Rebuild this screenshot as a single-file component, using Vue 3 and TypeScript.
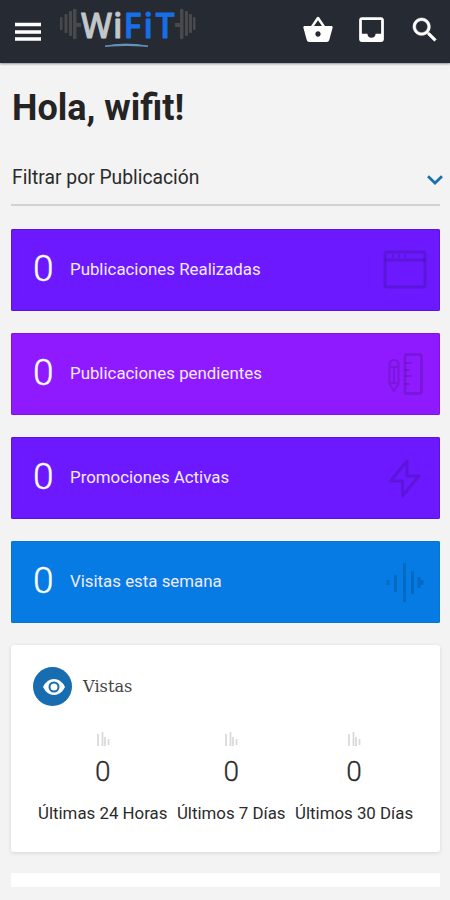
<script setup lang="ts">
type IconName = 'window' | 'tools' | 'bolt' | 'pulse'

interface StatCard {
  count: number
  label: string
  tone: 'indigo' | 'violet' | 'blue'
  icon: IconName
}

interface ViewStat {
  count: number
  label: string
}

const cards: StatCard[] = [
  { count: 0, label: 'Publicaciones Realizadas', tone: 'indigo', icon: 'window' },
  { count: 0, label: 'Publicaciones pendientes', tone: 'violet', icon: 'tools' },
  { count: 0, label: 'Promociones Activas', tone: 'indigo', icon: 'bolt' },
  { count: 0, label: 'Visitas esta semana', tone: 'blue', icon: 'pulse' },
]

const views: ViewStat[] = [
  { count: 0, label: 'Últimas 24 Horas' },
  { count: 0, label: 'Últimos 7 Días' },
  { count: 0, label: 'Últimos 30 Días' },
]
</script>

<template>
  <div class="screen">
    <header class="topbar">
      <button class="icon-btn menu" aria-label="Menú">
        <svg width="26" height="20" viewBox="0 0 26 20">
          <path d="M0 2.5H26M0 10H26M0 17H26" stroke="#fff" stroke-width="3.4" />
        </svg>
      </button>
      <svg class="logo" width="140" height="54" viewBox="0 -5 140 54">
        <g fill="#47494b">
          <rect x="2" y="12" width="2.5" height="13" rx="1" />
          <rect x="6.5" y="9" width="3" height="19" rx="1" />
          <rect x="11" y="6" width="3" height="25" rx="1" />
          <rect x="15" y="4" width="3.5" height="30" rx="1" />
          <rect x="18" y="18" width="5" height="4" />
          <rect x="117" y="18" width="5" height="4" />
          <rect x="122" y="4" width="3.5" height="30" rx="1" />
          <rect x="127" y="6" width="3" height="25" rx="1" />
          <rect x="131" y="9" width="3" height="19" rx="1" />
          <rect x="135" y="12" width="2.5" height="13" rx="1" />
        </g>
        <text class="brand" y="32.5" fill="#c3c7ca" stroke="#c3c7ca"><tspan x="23" textLength="31" lengthAdjust="spacingAndGlyphs">W</tspan><tspan x="55">i</tspan></text>
        <text class="brand" y="32.5" fill="#176ee6" stroke="#176ee6"><tspan x="65.500">F</tspan><tspan x="85.500">i</tspan><tspan x="97.500">T</tspan></text>
        <path d="M47 41.200Q68 37 90 41.200Q68 39.700 47 41.200Z" fill="#6796bd" stroke="#6796bd" stroke-width="1" />
      </svg>
      <nav class="actions">
        <button class="icon-btn" aria-label="Carrito">
          <svg width="32" height="32" viewBox="0 0 24 24" fill="#fff">
            <path d="M17.21 9l-4.38-6.56c-.19-.28-.51-.42-.83-.42-.32 0-.64.14-.83.43L6.79 9H2c-.55 0-1 .45-1 1 0 .09.01.18.04.27l2.54 9.27c.23.84 1 1.46 1.92 1.46h13c.92 0 1.69-.62 1.93-1.46l2.54-9.27L23 10c0-.55-.45-1-1-1h-4.79zM9 9l3-4.400L15 9H9zm3 8c-1.100 0-2-.9-2-2s.9-2 2-2 2 .9 2 2-.9 2-2 2z" />
          </svg>
        </button>
        <button class="icon-btn" aria-label="Bandeja">
          <svg width="33" height="33" viewBox="0 0 24 24" fill="#fff">
            <path d="M19 3H4.990c-1.110 0-1.980.89-1.980 2L3 19c0 1.100.88 2 1.990 2H19c1.100 0 2-.9 2-2V5c0-1.110-.9-2-2-2zm0 12h-4c0 1.660-1.350 3-3 3s-3-1.340-3-3H4.990V5H19v10z" />
          </svg>
        </button>
        <button class="icon-btn" aria-label="Buscar">
          <svg width="32" height="32" viewBox="0 0 24 24" fill="#fff" stroke="#fff" stroke-width="0.400">
            <path d="M15.500 14h-.79l-.28-.27C15.410 12.590 16 11.110 16 9.500 16 5.910 13.090 3 9.500 3S3 5.910 3 9.500 5.910 16 9.500 16c1.610 0 3.090-.59 4.230-1.570l.27.28v.79l5 4.990L20.490 19l-4.990-5zm-6 0C7.010 14 5 11.990 5 9.500S7.010 5 9.500 5 14 7.010 14 9.500 11.990 14 9.500 14z" />
          </svg>
        </button>
      </nav>
    </header>

    <main class="content">
      <h1>Hola, wifit!</h1>

      <div class="filter">
        <span>Filtrar por Publicación</span>
        <svg width="18" height="12" viewBox="0 0 18 12" fill="none">
          <path d="M2 2.200L9 9L16 2.200" stroke="#1970ac" stroke-width="2.700" />
        </svg>
      </div>

      <section class="cards">
        <article v-for="card in cards" :key="card.label" class="card" :class="card.tone">
          <span class="count">{{ card.count }}</span>
          <span class="label">{{ card.label }}</span>
          <svg class="glyph" width="46" height="46" viewBox="0 0 46 46" fill="none" stroke-width="3">
            <g v-if="card.icon === 'window'">
              <rect x="3" y="5" width="40" height="35" rx="2" />
              <path d="M3 13H43M10 9H12M16 9H18M22 9H24" />
            </g>
            <g v-else-if="card.icon === 'tools'">
              <path d="M7.500 14Q7.500 9 12 9T16.500 14V33L12 40L7.500 33ZM7.500 16H16.500M7.500 32H16.500M12 17V32" stroke-width="2.200" />
              <rect x="23" y="3.500" width="16.500" height="39" rx="2" />
              <path d="M23 12H30M23 19H28M23 25H30M23 33H28" stroke-width="2" />
            </g>
            <path v-else-if="card.icon === 'bolt'" d="M25 6L8.500 26H20.500V41L37 21H25Z" stroke-linejoin="round" />
            <path v-else d="M6 21V26M13.500 16V33M22.500 4V43M30.500 12V35M37 18V29M40 21V26" />
          </svg>
        </article>
      </section>

      <section class="panel">
        <div class="panel-head">
          <span class="badge">
            <svg width="24" height="18" viewBox="0 0 24 18">
              <path d="M1 9Q5 1 12 1T23 9Q19 17 12 17T1 9Z" fill="#fff" />
              <circle cx="12" cy="9" r="4.500" fill="#fff" stroke="#176daf" stroke-width="2" />
            </svg>
          </span>
          <h2>Vistas</h2>
        </div>
        <div class="views">
          <div v-for="view in views" :key="view.label" class="view">
            <svg width="14" height="14" viewBox="0 0 14 14">
              <path d="M2 2V14M6.500 0V14M9 5V14M12.500 7V13" stroke="#d8d8d8" stroke-width="1.700" />
            </svg>
            <strong>{{ view.count }}</strong>
            <span>{{ view.label }}</span>
          </div>
        </div>
      </section>

      <div class="next-panel"></div>
    </main>
  </div>
</template>

<style>
body {
  background: #f3f3f3;
}
</style>

<style scoped>
* {
  box-sizing: border-box;
}

.screen {
  width: 450px;
  height: 900px;
  overflow: hidden;
  background: #f3f3f3;
  color: #2b2b2b;
  font-family: Roboto, "Liberation Sans", sans-serif;
  white-space: nowrap;
}

.topbar {
  display: flex;
  align-items: flex-start;
  height: 63px;
  padding-left: 15px;
  background: #262a32;
  box-shadow: 0 1px 2px #8f9397;
}

.icon-btn {
  display: block;
  padding: 0;
  border: 0;
  background: none;
}

.icon-btn svg,
.logo {
  display: block;
}

.menu {
  margin-top: 22px;
}

.logo {
  margin: 0 0 0 17px;
}

.brand {
  font: 600 34px "Open Sans", "Liberation Sans", sans-serif;
  stroke-width: 0.800px;
  stroke-linejoin: round;
}

.actions {
  display: flex;
  gap: 21px;
  margin: 13px 0 0 104px;
}

.content {
  padding: 0 10px 0 11px;
}

h1 {
  height: 40px;
  margin: 25px 0 0 1px;
  color: #242424;
  font-size: 36px;
  font-weight: 700;
  line-height: 40px;
}

.filter {
  display: flex;
  align-items: center;
  justify-content: space-between;
  height: 56px;
  margin-top: 22px;
  padding: 0 0 0 1px;
  border-bottom: 2px solid #d2d2d2;
  font-size: 19.300px;
}

.filter svg {
  margin: 5px -4px 0 0;
}

.cards {
  display: grid;
  gap: 22px;
  margin-top: 23px;
}

.card {
  display: flex;
  align-items: center;
  height: 82px;
  padding: 0 12px 0 22px;
  border-radius: 2px;
  color: #f3eaff;
}

.indigo {
  background: #6c19ff;
  box-shadow: inset 0 0 0 1px #5b12e4;
}

.violet {
  background: #901aff;
  box-shadow: inset 0 0 0 1px #8013e5;
}

.blue {
  background: #057be3;
  box-shadow: inset 0 0 0 1px #0874cf;
}

.count {
  width: 37px;
  padding-bottom: 4px;
  color: #fff;
  font-size: 37px;
  font-weight: 300;
  -webkit-text-stroke: 0.400px #fff;
}

.label {
  padding-bottom: 2px;
  font-size: 16.850px;
}

.glyph {
  margin-left: auto;
  stroke: rgba(0, 0, 0, 0.14);
}

.panel {
  height: 207px;
  margin-top: 22px;
  padding: 22px 22px 0;
  border-radius: 3px;
  background: #fff;
  box-shadow: 0 1px 4px rgba(0, 0, 0, 0.12);
}

.panel-head {
  display: flex;
  align-items: center;
  gap: 11px;
}

.badge {
  display: grid;
  place-items: center;
  width: 39px;
  height: 39px;
  padding-left: 3px;
  border-radius: 50%;
  background: #176daf;
}

h2 {
  margin: 0;
  color: #444;
  font: 400 16.200px "DejaVu Serif", serif;
}

.views {
  display: flex;
  gap: 9.500px;
  margin: 26px 0 0 5px;
}

.view {
  display: flex;
  flex-direction: column;
  align-items: center;
}

.view strong {
  margin-top: 9px;
  font-size: 28px;
  font-weight: 300;
  line-height: 34px;
  -webkit-text-stroke: 0.300px #2b2b2b;
}

.view span {
  margin-top: 13px;
  font-size: 16.850px;
  line-height: 22px;
}

.next-panel {
  height: 14px;
  margin-top: 21px;
  background: #fff;
}
</style>
